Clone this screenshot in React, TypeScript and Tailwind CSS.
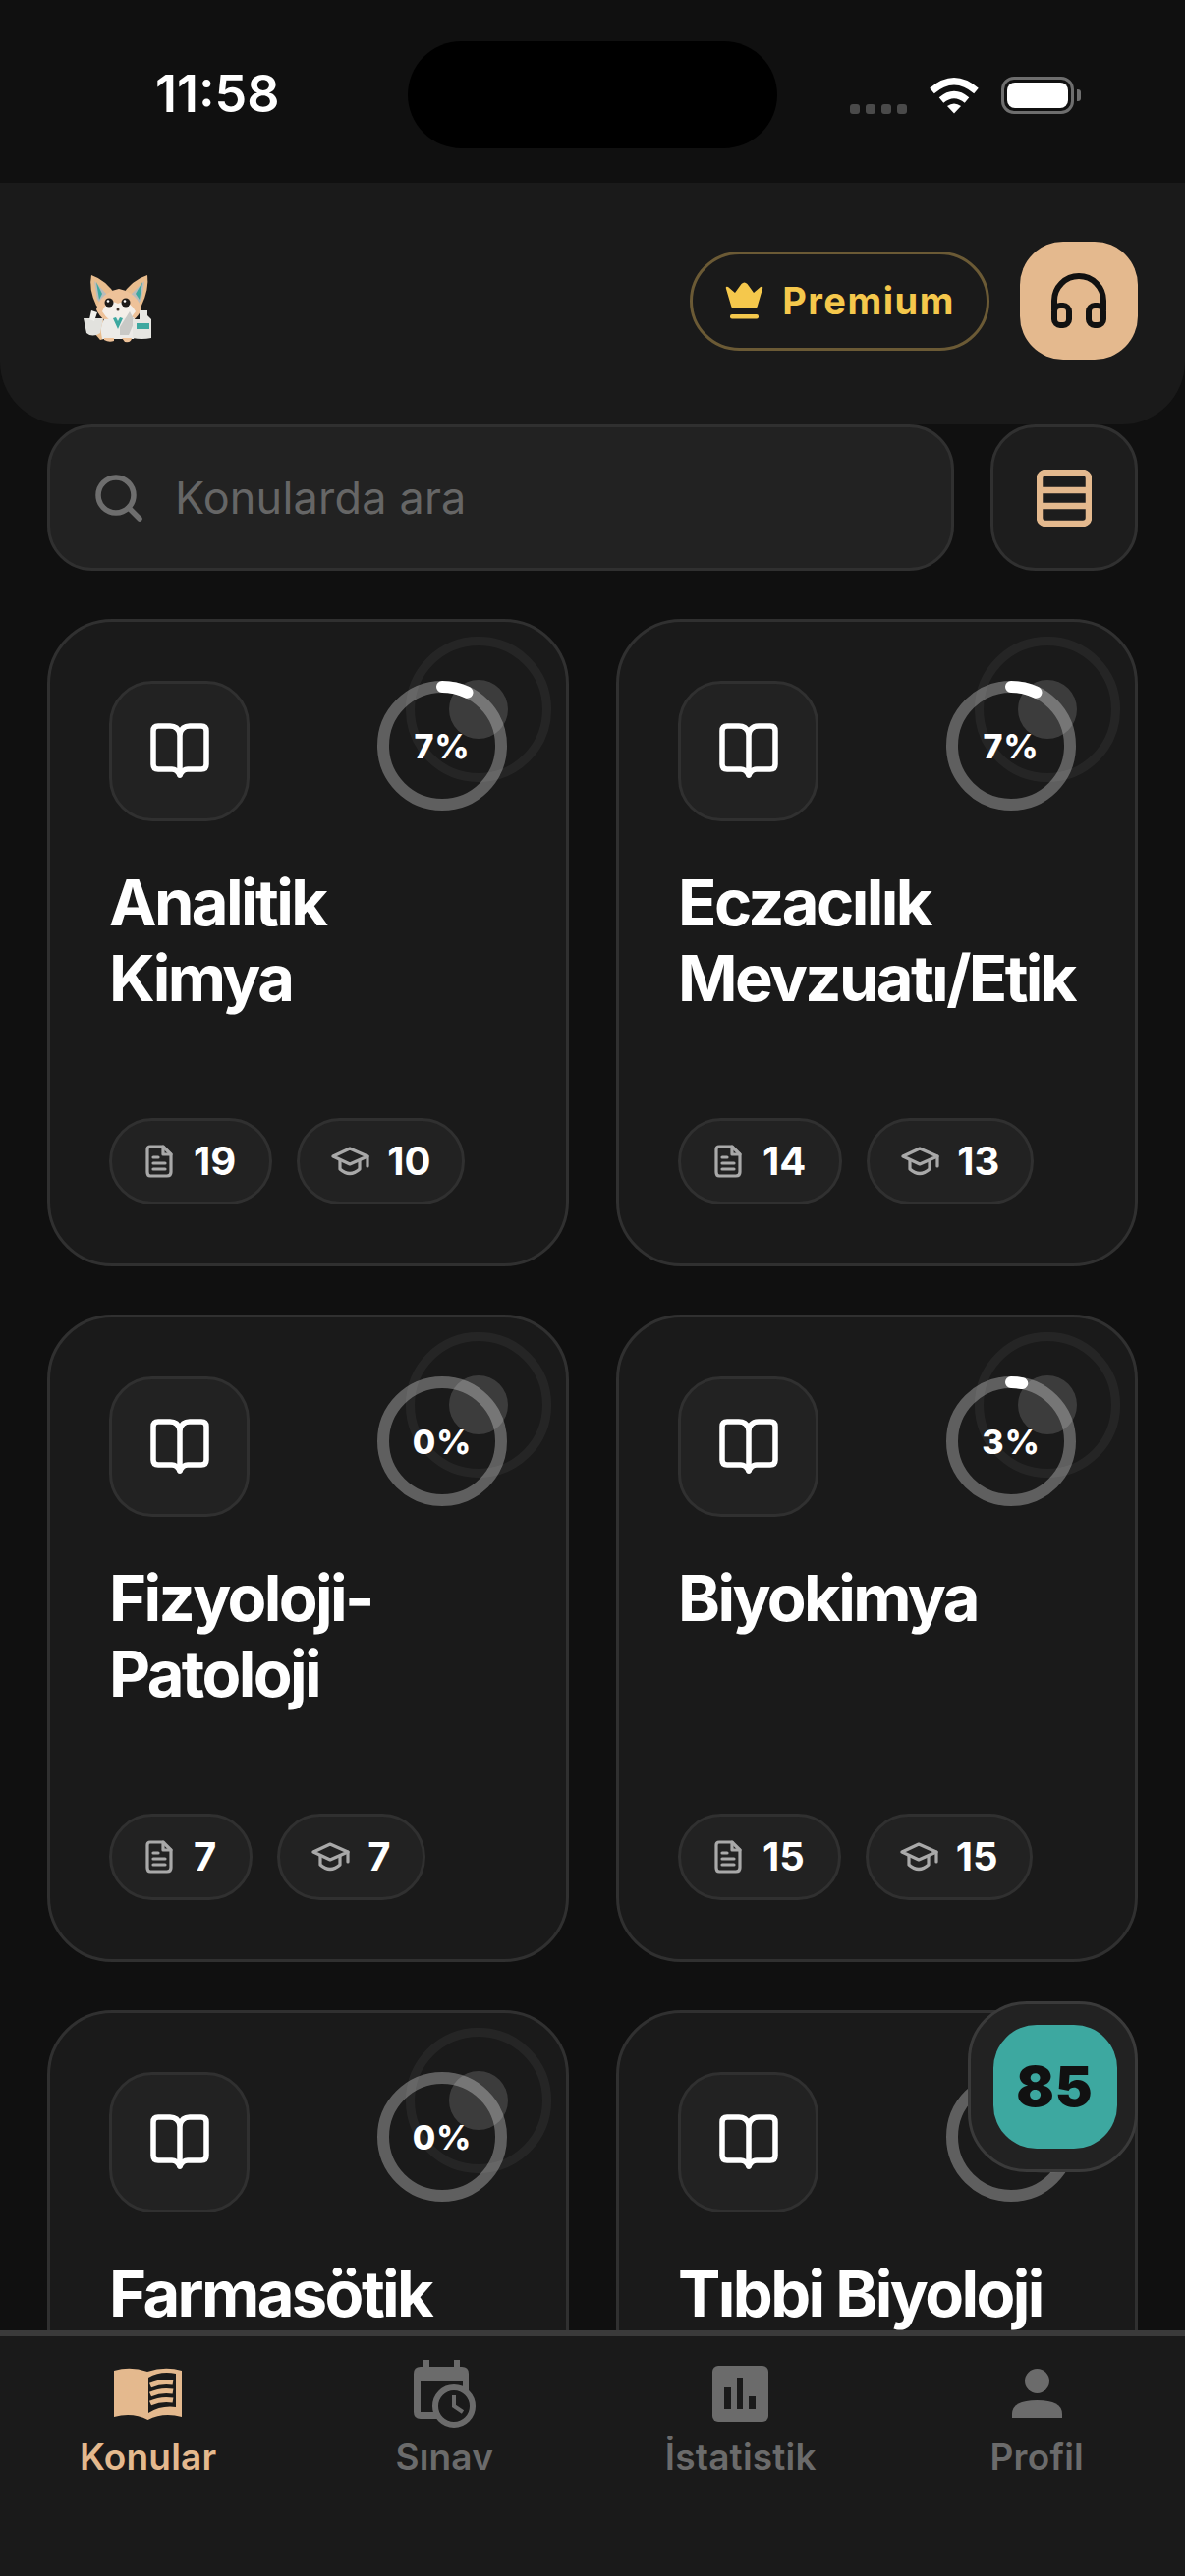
const topics = [
  { title: ['Analitik', 'Kimya'], percent: 7, notes: 19, exams: 10 },
  { title: ['Eczacılık', 'Mevzuatı/Etik'], percent: 7, notes: 14, exams: 13 },
  { title: ['Fizyoloji-', 'Patoloji'], percent: 0, notes: 7, exams: 7 },
  { title: ['Biyokimya'], percent: 3, notes: 15, exams: 15 },
  { title: ['Farmasötik', 'Teknoloji'], percent: 0, notes: 12, exams: 9 },
  { title: ['Tıbbi Biyoloji'], percent: 0, notes: 11, exams: 8 },
];

function FoxLogo() {
  return (
    <svg width="120" height="120" viewBox="0 0 120 120">
      <path d="M33 31 Q48 36 58 52 L46 70 L38 62 Q30 45 33 31Z" fill="#e9bd8e" />
      <path d="M90 31 Q74 36 64 52 L75 70 L84 62 Q92 45 90 31Z" fill="#e9bd8e" />
      <path d="M36 37 L50 52 L44 62 L39 56Z" fill="#b9bcbc" />
      <path d="M87 37 L72 52 L79 62 L84 56Z" fill="#b9bcbc" />
      <path d="M38 38 L44 50 L41 56Z" fill="#3da8a0" />
      <path d="M85 38 L78 50 L82 56Z" fill="#3da8a0" />
      <path d="M38 66 Q42 49 61 45 Q80 49 84 66 Q78 80 61 82 Q44 80 38 66Z" fill="#eec299" />
      <path d="M44 68 Q50 54 60 60 Q70 54 78 68 Q72 78 60 81 Q50 78 44 68Z" fill="#f4efe9" />
      <path d="M36 90 Q34 78 45 76 L50 95 L42 97Z" fill="#e9bd8e" />
      <path d="M46 76 L76 74 Q82 84 76 96 L44 96 Q41 84 46 76Z" fill="#ecebe8" />
      <path d="M55 75 L60 86 L65 75 L62 74 L60 78 L58 74Z" fill="#3da8a0" />
      <path d="M62 84 L72 68 L77 78 L71 92 L62 92Z" fill="#c9c9c6" />
      <path d="M46 95 H56 V98 Q51 100 46 97Z M64 95 H74 Q74 100 67 99Z" fill="#eec299" />
      <path d="M25 75 H45 L42 90 Q34 95 28 90Z" fill="#e2e2de" />
      <path d="M33 67 L39 69 L36 78 L31 76Z" fill="#f0f0ec" />
      <path d="M75 76 L82 76 L82 67 L90 67 L90 72 L94 76 V95 Q84 97 75 95Z" fill="#e6e6e2" />
      <path d="M79 80 H92 V86 H79Z" fill="#3da8a0" />
      <circle cx="51" cy="59" r="4.5" fill="#1d1a18" />
      <circle cx="68" cy="59" r="4.5" fill="#1d1a18" />
      <circle cx="50" cy="57.5" r="1.3" fill="#ffffff" />
      <circle cx="67" cy="57.5" r="1.3" fill="#ffffff" />
      <circle cx="60" cy="66" r="1.5" fill="#3a2c24" />
    </svg>
  );
}

function Crown() {
  return (
    <svg width="41" height="38" viewBox="0 0 41 38" fill="#f5c84c">
      <path d="M2 7 Q1 4 4 5 L11 11 L17.5 2 Q20.5 -1 23.5 2 L30 11 L37 5 Q40 4 39 7 L34 24 Q33.5 27 31 27 L10 27 Q7.5 27 7 24 Z" />
      <rect x="6" y="33" width="29" height="4.5" rx="2" />
    </svg>
  );
}

function Headphones() {
  return (
    <svg width="56" height="56" viewBox="0 0 56 56" fill="none" stroke="#111111" strokeWidth="6">
      <path d="M3 38 V28 a25 25 0 0 1 50 0 V38" />
      <rect x="3" y="33" width="15" height="20" rx="6" />
      <rect x="38" y="33" width="15" height="20" rx="6" />
    </svg>
  );
}

function BookOutline() {
  return (
    <svg width="60" height="57" viewBox="0 0 60 57" fill="none" stroke="#ffffff" strokeWidth="5.5" strokeLinejoin="round" strokeLinecap="round">
      <path d="M30 11 Q28 3 20 3 H8 Q3 3 3 8 V42 Q3 47 8 47 H22 Q27 47 30 53 Q33 47 38 47 H52 Q57 47 57 42 V8 Q57 3 52 3 H40 Q32 3 30 11 Z" />
      <path d="M30 11 V53" />
    </svg>
  );
}

function NoteIcon() {
  return (
    <svg width="28" height="34" viewBox="0 0 28 34" fill="none" stroke="#a9a9a9" strokeWidth="3.2" strokeLinejoin="round" strokeLinecap="round">
      <path d="M5 2 H18 L26 10 V28 Q26 32 22 32 H5 Q2 32 2 28 V5 Q2 2 5 2 Z" />
      <path d="M18 2 V10 H26" />
      <path d="M8 13 H13 M8 19 H20 M8 25 H20" />
    </svg>
  );
}

function CapIcon() {
  return (
    <svg width="40" height="30" viewBox="0 0 40 30" fill="none" stroke="#a9a9a9" strokeWidth="3.2" strokeLinejoin="round" strokeLinecap="round">
      <path d="M19 2 L37 10 L19 18 L2 10 Z" />
      <path d="M9 14 V23 Q19 32 29 23 V14" />
      <path d="M37 10 V20" />
    </svg>
  );
}

function ProgressRing({ percent }: { percent: number }) {
  const radius = 60;
  const circumference = 2 * Math.PI * radius;
  return (
    <div className="relative w-[132px] h-[132px]">
      <svg width="132" height="132" viewBox="0 0 132 132" className="-rotate-90">
        <circle cx="66" cy="66" r={radius} fill="none" stroke="#ffffff" strokeOpacity="0.3" strokeWidth="12" />
        {percent > 0 && (
          <circle
            cx="66"
            cy="66"
            r={radius}
            fill="none"
            stroke="#ffffff"
            strokeWidth="12"
            strokeLinecap="round"
            strokeDasharray={`${(circumference * percent) / 100} ${circumference}`}
          />
        )}
      </svg>
      <div className="absolute inset-0 flex items-center justify-center text-white font-extrabold text-[34px] tracking-[1px]">
        {percent}%
      </div>
    </div>
  );
}

function TopicCard({ topic }: { topic: (typeof topics)[number] }) {
  return (
    <div className="relative h-[659px] rounded-[66px] border-[3px] border-[#303030] bg-[#1a1a1a] p-[60px] flex flex-col">
      <div className="absolute top-[15px] right-[15px] w-[148px] h-[148px] rounded-full border-[9px] border-white/5" />
      <div className="absolute top-[59px] right-[59px] w-[60px] h-[60px] rounded-full bg-white/15" />
      <div className="relative flex items-start justify-between">
        <div className="w-[143px] h-[143px] rounded-[44px] border-[3px] border-[#303030] bg-[#222222] flex items-center justify-center">
          <BookOutline />
        </div>
        <ProgressRing percent={topic.percent} />
      </div>
      <h3 className="mt-[44px] text-white font-bold text-[65px] leading-[77px] tracking-[-2.6px]">
        {topic.title.map((line) => (
          <div key={line}>{line}</div>
        ))}
      </h3>
      <div className="mt-auto flex gap-[25px]">
        <div className="h-[88px] rounded-full border-[3px] border-[#303030] bg-[#222222] px-[34px] flex items-center gap-[21px]">
          <NoteIcon />
          <span className="text-white font-bold text-[40px]">{topic.notes}</span>
        </div>
        <div className="h-[88px] rounded-full border-[3px] border-[#303030] bg-[#222222] px-[32px] flex items-center gap-[17px]">
          <CapIcon />
          <span className="text-white font-bold text-[40px]">{topic.exams}</span>
        </div>
      </div>
    </div>
  );
}

function NavItem({ label, active, children }: { label: string; active?: boolean; children: React.ReactNode }) {
  return (
    <div className="flex flex-col items-center">
      <div className="h-[70px] flex items-center justify-center">{children}</div>
      <span className={`mt-[8px] text-[37px] leading-[44px] font-semibold tracking-[0.2px] ${active ? 'text-[#e4b98e]' : 'text-[#6b6b6b]'}`}>
        {label}
      </span>
    </div>
  );
}

export default function App() {
  return (
    <div className="relative h-[2622px] w-[1206px] overflow-hidden bg-[#101010] flex flex-col font-['Inter',sans-serif]">
      {/* status bar */}
      <div className="h-[186px] shrink-0 flex items-start pt-[42px]">
        <div className="w-[415px] pl-[158px] pt-[24px] text-white text-[52px] leading-[60px] font-semibold">11:58</div>
        <div className="w-[376px] h-[109px] rounded-[55px] bg-black" />
        <div className="ml-[74px] mt-[36px] h-[38px] flex items-end gap-[22px]">
          <div className="flex gap-[6px]">
            <div className="w-[10px] h-[10px] rounded-[3px] bg-[#4a4a4a]" />
            <div className="w-[10px] h-[10px] rounded-[3px] bg-[#4a4a4a]" />
            <div className="w-[10px] h-[10px] rounded-[3px] bg-[#4a4a4a]" />
            <div className="w-[10px] h-[10px] rounded-[3px] bg-[#4a4a4a]" />
          </div>
          <svg width="52" height="38" viewBox="0 0 52 38" fill="none" stroke="#ffffff" strokeWidth="7">
            <path d="M3.5 14.5 Q26 -5 48.5 14.5" />
            <path d="M13 24 Q26 13 39 24" />
            <path d="M19 30 Q26 25 33 30 L26 37.5 Z" fill="#ffffff" stroke="none" />
          </svg>
          <div className="flex items-center gap-[3px]">
            <div className="w-[74px] h-[38px] rounded-[13px] border-[3px] border-[#6e6e6e] p-[3px]">
              <div className="w-full h-full rounded-[8px] bg-white" />
            </div>
            <div className="w-[4px] h-[12px] rounded-r-[3px] bg-[#6e6e6e]" />
          </div>
        </div>
      </div>

      {/* header */}
      <div className="h-[246px] shrink-0 rounded-b-[64px] bg-[#1a1a1a] pl-[60px] pr-[48px] pb-[6px] flex items-center justify-between">
        <div className="mt-[6px]">
          <FoxLogo />
        </div>
        <div className="flex items-center gap-[31px]">
          <div className="h-[101px] w-[305px] rounded-full border-[3px] border-[#6b5a35] flex items-center justify-center gap-[18px]">
            <Crown />
            <span className="text-[#f5c84c] text-[38px] font-bold tracking-[1.5px]">Premium</span>
          </div>
          <div className="w-[120px] h-[120px] rounded-[44px] bg-[#e4b98e] flex items-center justify-center">
            <Headphones />
          </div>
        </div>
      </div>

      {/* search */}
      <div className="h-[149px] shrink-0 px-[48px] flex gap-[37px]">
        <div className="flex-1 rounded-[46px] border-[3px] border-[#303030] bg-[#222222] pl-[46px] flex items-center gap-[33px]">
          <svg width="48" height="48" viewBox="0 0 48 48" fill="none" stroke="#6e6e6e" strokeWidth="5.5" strokeLinecap="round">
            <circle cx="21" cy="21" r="18" />
            <path d="M34 34 L45 45" />
          </svg>
          <span className="text-[#666666] text-[45px] font-normal tracking-[0.2px]">Konularda ara</span>
        </div>
        <div className="w-[150px] rounded-[46px] border-[3px] border-[#303030] bg-[#1d1d1d] flex items-center justify-center">
          <svg width="56" height="58" viewBox="0 0 56 58" fill="none" stroke="#e4b98e" strokeWidth="6.5">
            <rect x="3" y="3" width="50" height="52" rx="6" />
            <path d="M3 21 H53 M3 37 H53" />
          </svg>
        </div>
      </div>

      {/* topics */}
      <div className="flex-1 min-h-0 overflow-hidden px-[48px] pt-[49px]">
        <div className="grid grid-cols-2 gap-x-[48px] gap-y-[49px]">
          {topics.map((topic) => (
            <TopicCard key={topic.title[0]} topic={topic} />
          ))}
        </div>
      </div>

      {/* tab bar */}
      <div className="h-[250px] shrink-0 border-t-[6px] border-[#3a3a3a] bg-[#1a1a1a] pt-[23px] grid grid-cols-4">
        <NavItem label="Konular" active>
          <svg width="69" height="53" viewBox="0 0 69 53">
            <path
              fillRule="evenodd"
              fill="#e4b98e"
              d="M0 3 Q17 -2 34 4 Q52 -2 69 3 V50 Q50 45 34.5 53 Q19 45 0 50 Z M35 10 Q47 3 63 6 V40 Q48 38 35 46 Z"
            />
            <path d="M37 18 Q48 13 60 15 M37 27 Q48 22 60 24 M37 36 Q48 31 60 33" fill="none" stroke="#e4b98e" strokeWidth="5" />
          </svg>
        </NavItem>
        <NavItem label="Sınav">
          <svg width="63" height="69" viewBox="0 0 63 69">
            <rect x="10" y="0" width="6" height="10" fill="#6b6b6b" />
            <rect x="41" y="0" width="6" height="10" fill="#6b6b6b" />
            <path d="M7 7 H49 Q56 7 56 14 V40 H50 V22 H7 V53 H30 V60 H7 Q0 60 0 53 V14 Q0 7 7 7 Z" fill="#6b6b6b" />
            <circle cx="41" cy="47" r="19" fill="#1a1a1a" stroke="#6b6b6b" strokeWidth="6" />
            <path d="M41 36 V47 L50 53" fill="none" stroke="#6b6b6b" strokeWidth="4" />
          </svg>
        </NavItem>
        <NavItem label="İstatistik">
          <svg width="57" height="57" viewBox="0 0 57 57">
            <rect width="57" height="57" rx="6" fill="#6b6b6b" />
            <rect x="12" y="22" width="7" height="22" fill="#1a1a1a" />
            <rect x="25" y="12" width="6" height="32" fill="#1a1a1a" />
            <rect x="37" y="31" width="7" height="13" fill="#1a1a1a" />
          </svg>
        </NavItem>
        <NavItem label="Profil">
          <svg width="51" height="50" viewBox="0 0 51 50" fill="#6b6b6b">
            <circle cx="25.5" cy="12.5" r="12.5" />
            <path d="M0 50 V46 Q0 32 25.5 32 Q51 32 51 46 V50 Z" />
          </svg>
        </NavItem>
      </div>

      {/* floating score */}
      <div className="absolute left-[985px] top-[2037px] w-[173px] h-[174px] rounded-[60px] border-[3px] border-[#3a3a3a] bg-[#222222] flex items-center justify-center">
        <div className="ml-[4px] w-[126px] h-[126px] rounded-[44px] bg-[#3da8a0] flex items-center justify-center text-[#111111] font-black text-[57px] tracking-[1px]">
          85
        </div>
      </div>
    </div>
  );
}
